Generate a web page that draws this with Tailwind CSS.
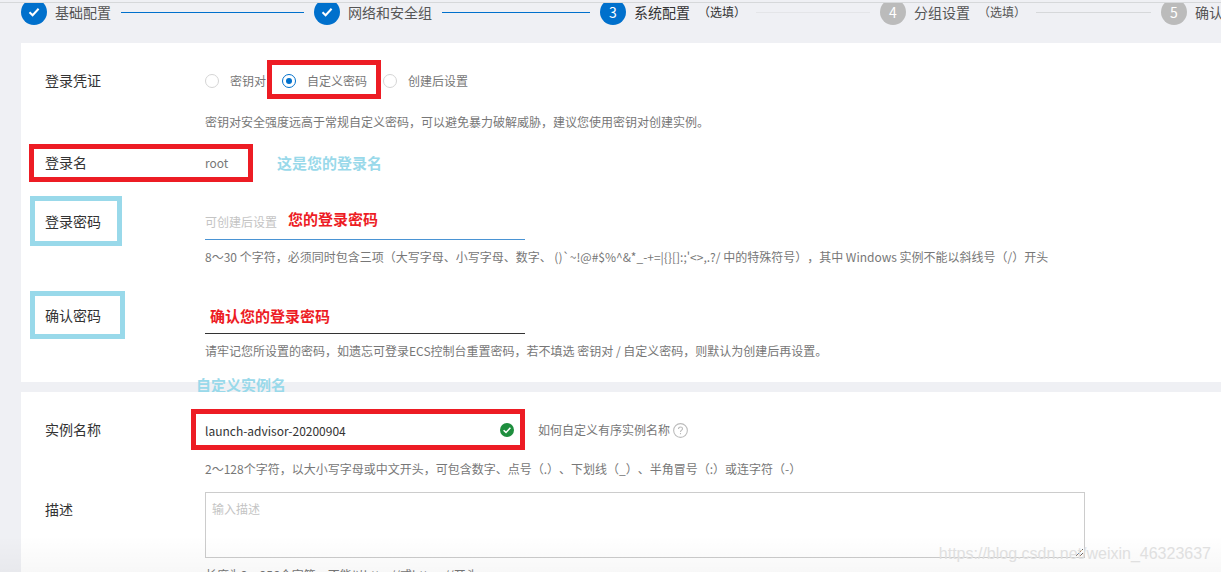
<!DOCTYPE html>
<html lang="zh-CN">
<head>
    <meta charset="UTF-8">
    <meta name="viewport" content="width=device-width, initial-scale=1.0">
    <title>系统配置</title>
    <script src="https://cdn.jsdelivr.net/npm/@tailwindcss/browser@4"></script>
    <style>
        body { font-family: 'Noto Sans CJK SC', sans-serif; text-spacing-trim: space-all; }
    </style>
</head>
<body class="relative h-screen overflow-hidden bg-[#eff0f4] text-xs text-[#777]">

    <!-- 步骤条 -->
    <header class="mt-[2px] h-[41px] overflow-hidden border-t border-[#d6d8da] pl-[21px]">
        <ol class="-mt-1 flex whitespace-nowrap text-sm leading-[26px] text-[#555]">
            <li class="flex w-[293px] shrink-0 items-center">
                <span class="mr-2 flex size-[26px] items-center justify-center rounded-full bg-[#0070cc]">
                    <svg class="size-3" viewBox="0 0 12 12" fill="none" stroke="#fff" stroke-width="2"><path d="M1.5 6.2 4.6 9.2 10.6 2.8"/></svg>
                </span>
                基础配置
                <span class="mx-[10px] h-px flex-1 bg-[#0070cc]"></span>
            </li>
            <li class="flex w-[286px] shrink-0 items-center">
                <span class="mr-2 flex size-[26px] items-center justify-center rounded-full bg-[#0070cc]">
                    <svg class="size-3" viewBox="0 0 12 12" fill="none" stroke="#fff" stroke-width="2"><path d="M1.5 6.2 4.6 9.2 10.6 2.8"/></svg>
                </span>
                网络和安全组
                <span class="mx-[10px] h-px flex-1 bg-[#0070cc]"></span>
            </li>
            <li class="flex w-[280px] shrink-0 items-center text-[#333]">
                <span class="mr-2 size-[26px] rounded-full bg-[#0070cc] text-center text-white">3</span>
                系统配置
                <span class="ml-2 text-xs">（选填）</span>
                <span class="mx-[10px] h-px flex-1 bg-[#e4e5e8]"></span>
            </li>
            <li class="flex w-[281px] shrink-0 items-center">
                <span class="mr-2 size-[26px] rounded-full bg-[#bbb] text-center text-white">4</span>
                分组设置
                <span class="ml-2 text-xs">（选填）</span>
                <span class="mx-[10px] h-px flex-1 bg-[#d6d8da]"></span>
            </li>
            <li class="flex shrink-0 items-center">
                <span class="mr-2 size-[26px] rounded-full bg-[#bbb] text-center text-white">5</span>
                确认订单
            </li>
        </ol>
    </header>

    <form>
        <!-- 登录设置 -->
        <section class="relative ml-[21px] bg-white pt-[18px] pb-[22px] pl-6">
            <fieldset class="flex h-10 items-center">
                <legend class="float-left w-40 pb-[2px] text-sm text-[#333]">登录凭证</legend>
                <div class="flex gap-4">
                    <label class="flex items-center gap-[11px]">
                        <input type="radio" name="credential" class="size-[14px] appearance-none rounded-full border border-[#d5d5d5] bg-white checked:border-[#0070cc]">
                        密钥对
                    </label>
                    <label class="flex items-center gap-[11px]">
                        <input type="radio" name="credential" checked class="flex size-[14px] appearance-none items-center justify-center rounded-full border border-[#d5d5d5] bg-white checked:border-[#0070cc] checked:before:size-[6px] checked:before:rounded-full checked:before:bg-[#0070cc]">
                        自定义密码
                    </label>
                    <label class="flex items-center gap-[11px]">
                        <input type="radio" name="credential" class="size-[14px] appearance-none rounded-full border border-[#d5d5d5] bg-white checked:border-[#0070cc]">
                        创建后设置
                    </label>
                </div>
            </fieldset>
            <p class="mt-3 ml-40 leading-[18px]">密钥对安全强度远高于常规自定义密码，可以避免暴力破解威胁，建议您使用密钥对创建实例。</p>

            <div class="mt-3 flex h-10 items-center">
                <span class="w-40 pb-[2px] text-sm text-[#333]">登录名</span>
                <span>root</span>
            </div>

            <div class="mt-[21px] flex items-center">
                <label for="password" class="w-40 pb-[2px] text-sm text-[#333]">登录密码</label>
                <input id="password" type="password" placeholder="可创建后设置" class="h-9 w-80 border-b border-[#4a94d4] outline-none placeholder:text-[#c4c4c4]">
            </div>
            <p class="mt-2 ml-40 leading-[18px]">8～30 个字符，必须同时包含三项（大写字母、小写字母、数字、 ()`~!@#$%^&amp;*_-+=|{}[]:;'&lt;&gt;,.?/ 中的特殊符号），其中 Windows 实例不能以斜线号（/）开头</p>

            <div class="mt-8 flex items-center">
                <label for="confirm" class="w-40 pb-[2px] text-sm text-[#333]">确认密码</label>
                <input id="confirm" type="password" class="h-9 w-80 border-b border-[#333] outline-none">
            </div>
            <p class="mt-2 ml-40 leading-[18px]">请牢记您所设置的密码，如遗忘可登录ECS控制台重置密码，若不填选 密钥对 / 自定义密码，则默认为创建后再设置。</p>

            <!-- 标注 -->
            <div class="pointer-events-none absolute inset-0 text-[15px] leading-5 font-bold">
                <div class="absolute top-[17px] left-[246px] h-[39px] w-[114px] border-5 border-[#ed1c24]"></div>
                <div class="absolute top-[101px] left-2 h-[38px] w-[224px] border-5 border-[#ed1c24]"></div>
                <div class="absolute top-[153px] left-[9px] h-[50px] w-[92px] border-5 border-[#99d9ea]"></div>
                <div class="absolute top-[248px] left-[9px] h-[48px] w-[95px] border-5 border-[#99d9ea]"></div>
                <span class="absolute top-[110px] left-64 text-[#99d9ea]">这是您的登录名</span>
                <span class="absolute top-[166px] left-[267px] text-[#ed1c24]">您的登录密码</span>
                <span class="absolute top-[263px] left-[189px] text-[#ed1c24]">确认您的登录密码</span>
                <span class="absolute top-[332px] left-[175px] text-[#99d9ea]">自定义实例名</span>
            </div>
        </section>

        <!-- 实例信息 -->
        <section class="relative mt-[10px] ml-[21px] bg-white pt-5 pb-10 pl-6">
            <div class="flex items-center">
                <label for="instance-name" class="w-40 pb-[2px] text-sm text-[#333]">实例名称</label>
                <div class="relative flex w-80 items-center">
                    <input id="instance-name" type="text" value="launch-advisor-20200904" class="h-9 w-full text-[#333] outline-none">
                    <svg class="absolute right-[11px] size-[14px]" viewBox="0 0 14 14" fill="none"><circle cx="7" cy="7" r="7" fill="#1e8e3e"/><path d="M3.6 7.2 6 9.4 10.4 4.8" stroke="#fff" stroke-width="1.5"/></svg>
                </div>
                <a href="#" class="ml-[13px] flex items-center gap-[3px]">
                    如何自定义有序实例名称
                    <svg class="size-[15px]" viewBox="0 0 14 14" fill="none" stroke="#bbb"><circle cx="7" cy="7" r="6.4"/><path d="M5.1 5.6C5.1 4.4 5.9 3.7 7 3.7s1.9.7 1.9 1.7c0 1.3-1.9 1.4-1.9 3M7 9.4v1.2"/></svg>
                </a>
            </div>
            <p class="mt-3 ml-40 leading-[18px]">2～128个字符，以大小写字母或中文开头，可包含数字、点号（.）、下划线（_）、半角冒号（:）或连字符（-）</p>

            <div class="mt-[14px] flex items-start">
                <label for="description" class="w-40 text-sm leading-[34px] text-[#333]">描述</label>
                <textarea id="description" placeholder="输入描述" class="h-[66px] w-[880px] border border-[#ccc] px-[6px] py-[7px] leading-[18px] outline-none placeholder:text-[#c4c4c4]"></textarea>
            </div>
            <p class="mt-2 ml-40 leading-[18px]">长度为2～256个字符，不能以http://或https://开头</p>

            <div class="pointer-events-none absolute top-[17px] left-[170px] h-[41px] w-[334px] border-5 border-[#ed1c24]"></div>
        </section>
    </form>

    <!-- 水印 -->
    <div class="pointer-events-none absolute inset-x-0 bottom-0 h-9 bg-linear-to-t from-black/3 to-transparent pr-[10px] text-right font-['Liberation_Sans'] text-base leading-9 text-[#e0e0e0]">https://blog.csdn.net/weixin_46323637</div>
</body>
</html>
